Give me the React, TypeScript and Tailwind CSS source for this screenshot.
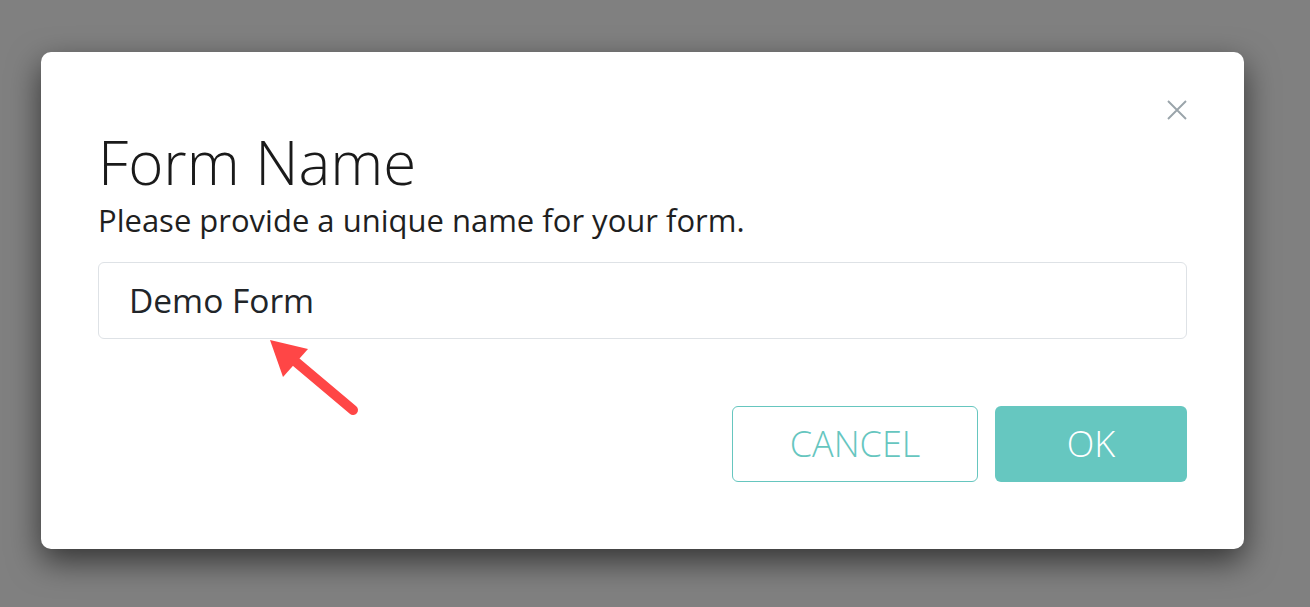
export default function App() {
  return (
    <div
      className="relative w-full h-[607px] bg-[#808080] pt-[52px] pl-[41px] overflow-hidden"
      style={{ fontFamily: '"Open Sans", "Noto Sans", sans-serif' }}
    >
      <div className="relative w-[1203px] h-[497px] bg-white rounded-[10px] shadow-[0_12px_32px_rgba(0,0,0,0.6)] px-[57px] pt-[48px]">
        {/* close */}
        <div className="flex justify-end h-[24px]">
          <button className="w-[20px] h-[20px]">
            <svg width="20" height="20" viewBox="0 0 20 20">
              <path d="M1 1L19 19M19 1L1 19" stroke="#9aa4aa" strokeWidth="1.9" />
            </svg>
          </button>
        </div>

        <h1 className="text-[60px] font-light text-[#1a1a1a] leading-[70px] mt-[3px]">Form Name</h1>
        <p className="text-[31px] text-[#1f1f1f] leading-[40px] mt-[3px]">
          Please provide a unique name for your form.
        </p>

        <div className="mt-[22px] h-[77px] border border-[#dee2e6] rounded-[6px] flex items-center pl-[30px]">
          <span className="text-[33.5px] text-[#212529]">Demo Form</span>
        </div>

        <div className="flex justify-end gap-[17px] mt-[67px]">
          <button className="w-[246px] h-[76px] border border-[#66c6bf] rounded-[6px] text-[#66c6bf] text-[36px] font-light">
            CANCEL
          </button>
          <button className="w-[192px] h-[76px] bg-[#66c7c0] rounded-[6px] text-white text-[36px] font-light">
            OK
          </button>
        </div>
      </div>

      {/* annotation arrow */}
      <svg className="absolute left-0 top-0 pointer-events-none" width="1310" height="607">
        <line x1="353" y1="410" x2="296" y2="362" stroke="#ff4646" strokeWidth="10" strokeLinecap="round" />
        <polygon points="270,340 283,377 308,349" fill="#ff4646" />
      </svg>
    </div>
  );
}
